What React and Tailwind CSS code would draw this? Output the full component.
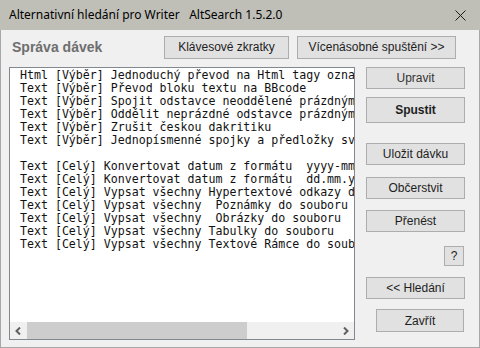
const LINES = [
  'Html [Výběr] Jednoduchý převod na Html tagy označení',
  'Text [Výběr] Převod bloku textu na BBcode',
  'Text [Výběr] Spojit odstavce neoddělené prázdným řádkem',
  'Text [Výběr] Oddělit neprázdné odstavce prázdným řádkem',
  'Text [Výběr] Zrušit českou dakritiku',
  'Text [Výběr] Jednopísmenné spojky a předložky svázat',
  '',
  'Text [Celý] Konvertovat datum z formátu  yyyy-mm-dd na dd.mm.yyyy',
  'Text [Celý] Konvertovat datum z formátu  dd.mm.yyyy na yyyy-mm-dd',
  'Text [Celý] Vypsat všechny Hypertextové odkazy do souboru',
  'Text [Celý] Vypsat všechny  Poznámky do souboru',
  'Text [Celý] Vypsat všechny  Obrázky do souboru',
  'Text [Celý] Vypsat všechny Tabulky do souboru',
  'Text [Celý] Vypsat všechny Textové Rámce do souboru',
]

const ui = { fontFamily: '"Liberation Sans", Arial, sans-serif' }

function Btn({ children, className = '', bold = false }) {
  return (
    <button
      style={ui}
      className={`flex items-center justify-center bg-[#e1e1e1] border border-[#adadad] text-[12px] leading-none text-[#1e1e1e] ${bold ? 'font-bold' : ''} ${className}`}
    >
      {children}
    </button>
  )
}

export default function App() {
  return (
    <div className="w-[480px] h-[348px] bg-[#f0f0f0] border-x border-b border-[#a7a7a7] flex flex-col">
      {/* Title bar */}
      <div className="h-[30px] -mx-px bg-[#bfbfb8] flex items-center pl-[9px] pr-[14px] shrink-0">
        <span
          className="text-[12px] text-black whitespace-pre"
          style={{ fontFamily: '"Segoe UI", "Noto Sans", sans-serif' }}
        >
          Alternativní hledání pro Writer   AltSearch 1.5.2.0
        </span>
        <svg className="ml-auto" width="11" height="11" viewBox="0 0 11 11">
          <path d="M0.5 0.5 L10.5 10.5 M10.5 0.5 L0.5 10.5" stroke="#1a1a1a" strokeWidth="1" fill="none" />
        </svg>
      </div>

      {/* Header row */}
      <div className="flex items-center mt-[6px] h-[22px]">
        <div className="w-[163px] pl-[11px] text-[14px] font-bold text-[#6e6e6e]" style={ui}>
          Správa dávek
        </div>
        <Btn className="w-[125px] h-[23px]">Klávesové zkratky</Btn>
        <Btn className="w-[159px] h-[23px] ml-[8px]">Vícenásobné spuštění &gt;&gt;</Btn>
      </div>

      {/* Main */}
      <div className="flex mt-[9px] pl-[8px]">
        <div className="w-[346px] h-[273px] border border-[#828790] bg-white flex flex-col">
          <div
            className="flex-1 overflow-hidden pl-[10px] pt-[1px] text-[11.6px] leading-[13px] text-[#111] whitespace-pre"
            style={{ fontFamily: '"DejaVu Sans Mono", monospace' }}
          >
            {LINES.map((l, i) => (
              <div key={i} className="h-[13px]">{l}</div>
            ))}
          </div>
          {/* horizontal scrollbar */}
          <div className="h-[17px] bg-[#f0f0f0] flex items-center">
            <div className="w-[17px] h-[17px] flex items-center justify-center">
              <svg width="7" height="8" viewBox="0 0 7 8">
                <path d="M5 0.5 L1.5 4 L5 7.5" stroke="#606060" strokeWidth="2" fill="none" />
              </svg>
            </div>
            <div className="w-[220px] h-[17px] bg-[#cdcdcd]" />
            <div className="ml-auto w-[17px] h-[17px] flex items-center justify-center">
              <svg width="7" height="8" viewBox="0 0 7 8">
                <path d="M2 0.5 L5.5 4 L2 7.5" stroke="#606060" strokeWidth="2" fill="none" />
              </svg>
            </div>
          </div>
        </div>

        {/* Right column */}
        <div className="ml-[11px] w-[99px] flex flex-col items-end">
          <Btn className="w-[99px] h-[22px] text-[#333]">Upravit</Btn>
          <Btn className="w-[99px] h-[26px] mt-[8px]" bold>Spustit</Btn>
          <Btn className="w-[99px] h-[22px] mt-[20px]">Uložit dávku</Btn>
          <Btn className="w-[99px] h-[22px] mt-[12px]">Občerstvit</Btn>
          <Btn className="w-[99px] h-[22px] mt-[11px]">Přenést</Btn>
          <Btn className="w-[20px] h-[20px] mt-[14px] mr-[1px]">?</Btn>
          <Btn className="w-[99px] h-[22px] mt-[11px]">&lt;&lt; Hledání</Btn>
          <Btn className="w-[88px] h-[23px] mt-[10px] mr-[1px]">Zavřít</Btn>
        </div>
      </div>
    </div>
  )
}
